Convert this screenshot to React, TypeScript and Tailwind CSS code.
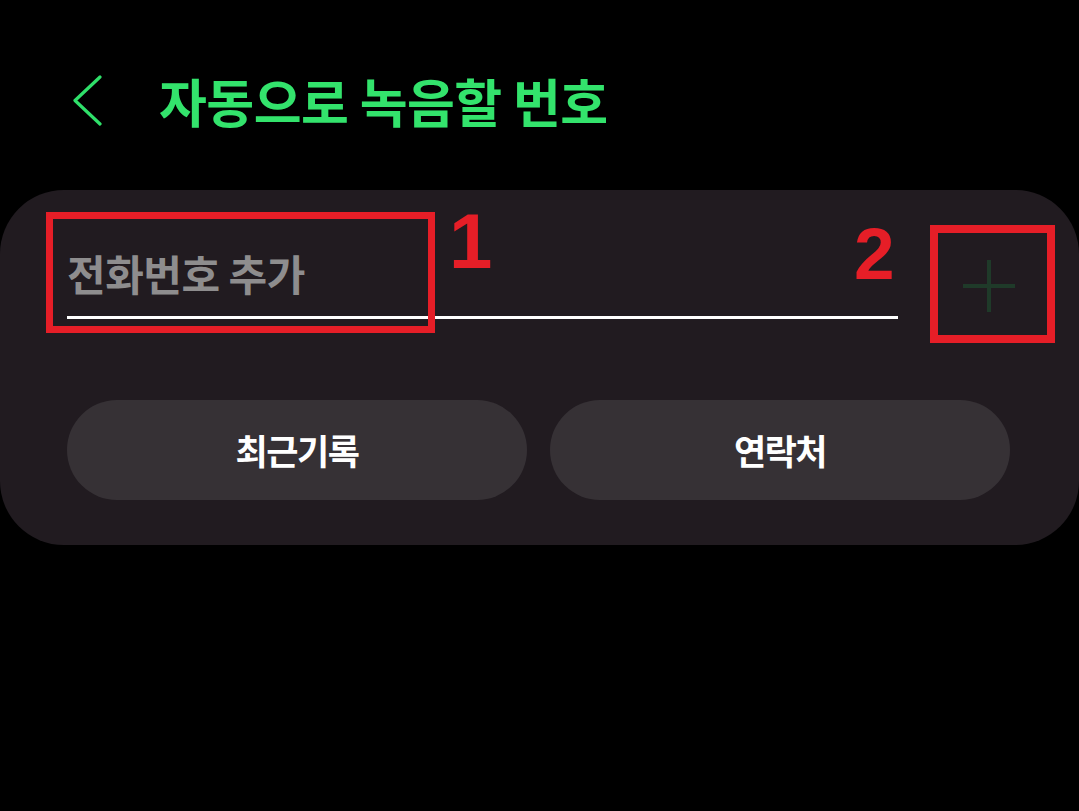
import React from "react";

const font = { fontFamily: '"Noto Sans CJK KR", "Noto Sans", sans-serif' };

const App = () => {
    return (
        <div className="w-[1079px] h-[811px] bg-black overflow-hidden font-['Noto_Sans_CJK_KR','Noto_Sans',sans-serif]">
            {/* header */}
            <div className="flex items-center pl-[72px] pt-[75px] h-[126px]">
                <svg width="31" height="51" viewBox="0 0 31 51" fill="none" className="shrink-0">
                    <path d="M28 2 L3 25.5 L28 49" stroke="#2fe06a" strokeWidth="3.2" strokeLinecap="round" strokeLinejoin="round" />
                </svg>
                <h1 className="ml-[56px] text-[52px] leading-none font-bold text-[#33e36c] tracking-[-0.5px]">자동으로 녹음할 번호</h1>
            </div>

            {/* card */}
            <div className="mt-[64px] w-[1079px] bg-[#211b20] rounded-[64px] pl-[67px] pr-[64px] pt-[62px] pb-[45px]">
                <div className="relative flex items-start">
                    <div className="w-[831px] shrink-0">
                        <div className="h-[52px] flex items-start text-[42px] leading-none font-semibold text-[#8e8d8e] tracking-[-0.5px]">전화번호 추가</div>
                        <div className="mt-[12px] h-[3px] bg-white" />
                    </div>
                    <div className="ml-[65px] mt-[8px] w-[52px] h-[52px] shrink-0 flex items-center justify-center">
                        <svg width="52" height="52" viewBox="0 0 52 52">
                            <path d="M26 0 V52 M0 26 H52" stroke="#1f3a29" strokeWidth="4" />
                        </svg>
                    </div>

                    {/* annotations */}
                    <div className="absolute left-[-21px] top-[-40px] w-[389px] h-[121px] border-[7px] border-[#e61e27]" />
                    <span className="absolute left-[382px] top-[-50px] text-[78px] leading-none font-bold text-[#e61e27] font-['Liberation_Sans',sans-serif]">1</span>
                    <span className="absolute left-[787px] top-[-35px] text-[73px] leading-none font-bold text-[#e61e27] font-['Liberation_Sans',sans-serif]">2</span>
                    <div className="absolute left-[863px] top-[-27px] w-[125px] h-[118px] border-[8px] border-[#e61e27]" />
                </div>

                <div className="mt-[81px] flex gap-[23px]">
                    <button className="w-[460px] h-[100px] rounded-[50px] bg-[#363135] text-white text-[35px] font-bold tracking-[-1.5px]" style={font}>최근기록</button>
                    <button className="w-[460px] h-[100px] rounded-[50px] bg-[#363135] text-white text-[35px] font-bold tracking-[-1.5px]" style={font}>연락처</button>
                </div>
            </div>
        </div>
    );
};

export default App;
